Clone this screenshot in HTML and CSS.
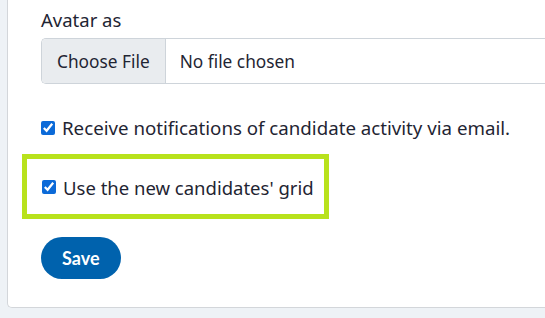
FILE: index.html
```html
<!DOCTYPE html>
<html lang="en">
<head>
<meta charset="utf-8">
<title>Profile settings</title>
<link rel="stylesheet" href="styles.css">
</head>
<body>
<div class="card">
  <form class="form">
    <div class="field">
      <div class="label">Avatar as</div>
      <label class="file">
        <span class="file-btn">Choose File</span>
        <span class="file-name">No file chosen</span>
      </label>
    </div>
    <label class="check check-first">
      <input type="checkbox" checked>
      <span>Receive notifications of candidate activity via email.</span>
    </label>
    <div class="highlight">
      <label class="check">
        <input type="checkbox" checked>
        <span>Use the new candidates' grid</span>
      </label>
    </div>
    <div class="actions">
      <button type="button" class="save">Save</button>
    </div>
  </form>
</div>
</body>
</html>
```
FILE: styles.css
```css
html, body {
  margin: 0;
  padding: 0;
}
body {
  background: #eef2f6;
  font-family: "Noto Sans", "Open Sans", sans-serif;
  font-size: 18.5px;
  line-height: 27px;
  color: #1f2533;
  height: 318px;
  overflow: hidden;
}
.card {
  margin-left: 7px;
  margin-right: -20px;
  background: #fff;
  border: 1px solid #d3d6da;
  border-top: 0;
  border-right: 0;
  border-bottom-left-radius: 5px;
  height: 308px;
  box-sizing: border-box;
}
.form {
  padding: 6px 0 0 14px;
}
.field {
  padding-left: 19px;
}
.label {
  height: 27px;
  margin-bottom: 5px;
}
.file {
  display: flex;
  height: 46px;
  box-sizing: border-box;
  border: 1px solid #ced4da;
  border-right: 0;
  border-radius: 5px 0 0 5px;
  overflow: hidden;
  background: #fff;
  font-size: 17.3px;
}
.file-btn {
  display: flex;
  align-items: center;
  padding: 0 15px;
  background: #e9ecef;
  border-right: 1px solid #ced4da;
}
.file-name {
  display: flex;
  align-items: center;
  padding-left: 14px;
}
.check {
  display: inline-flex;
  align-items: center;
  gap: 7px;
}
.check input {
  margin: 0;
  width: 14px;
  height: 14px;
  accent-color: #0b6ad8;
}
.check-first {
  display: flex;
  margin-top: 30px;
  padding-left: 19px;
  font-size: 18.7px;
}
.highlight {
  display: inline-block;
  margin-top: 13px;
  border: 5px solid #b8e21c;
  padding: 14px 10px 13px 15px;
}
.actions {
  margin-top: 18px;
  padding-left: 19px;
}
.save {
  font-family: "Lato", "Open Sans", sans-serif;
  font-weight: 700;
  font-size: 18px;
  line-height: 42px;
  height: 42px;
  padding: 0 21px;
  border: 0;
  border-radius: 21px;
  background: #0062ad;
  color: #fff;
}
```
